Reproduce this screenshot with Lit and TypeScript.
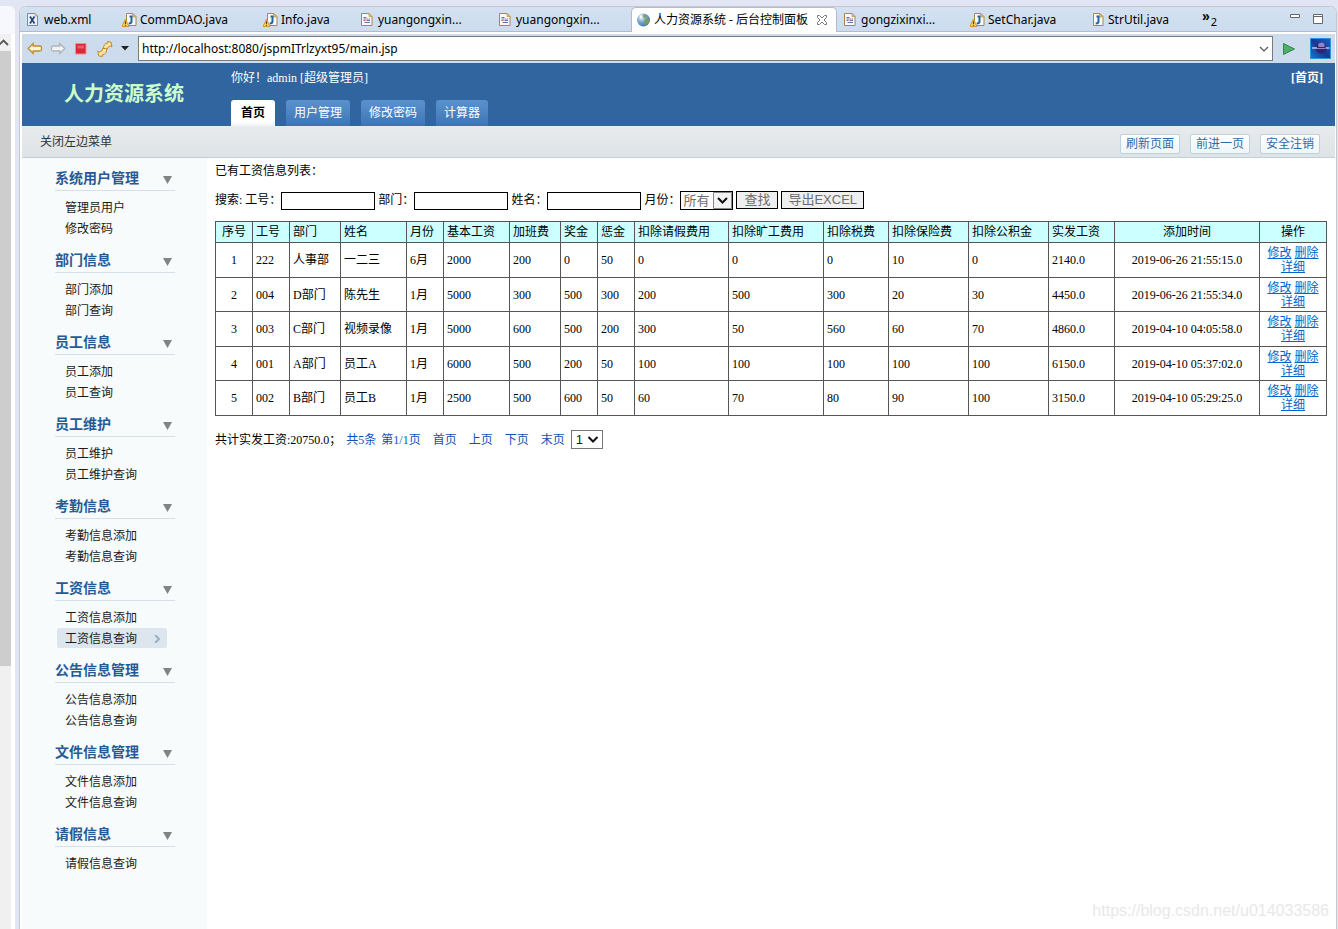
import { LitElement, html, css, svg } from "lit";
import { customElement } from "lit/decorators.js";
import { classMap } from "lit/directives/class-map.js";

const uiFont = css`"Noto Sans", "Noto Sans CJK SC", sans-serif`;
const pageFont = css`"Liberation Serif", "Noto Sans CJK SC", serif`;

type IconName = "xml" | "java" | "javaWarn" | "jsp" | "globe";

const sheet = svg`
  <path d="M4.5 1.5h6.500l3 3v9h-9.500z" fill="#f8f9fb" stroke="#a5884a"/>
  <path d="M10.500 1.500v3.500h3z" fill="#e8c987" stroke="#c09544" stroke-width=".8"/>`;

const jGlyph = svg`<path d="M7.500 4.500h2.600M9.500 4v5.200q0 2.300-2.800 2.300" fill="none" stroke="#2a639c" stroke-width="2"/>`;

const icons: Record<IconName, unknown> = {
  xml: svg`
    <path d="M1.500 1.500h7.500l2.500 2.500v9.500h-10z" fill="#eaf0f7" stroke="#7d8a9c"/>
    <path d="M9 1.500v2.500h2.500z" fill="#f0d39a" stroke="#b59a60" stroke-width=".6"/>
    <path d="M4 4.500l4.500 7M8.500 4.500l-4.500 7" stroke="#24467c" stroke-width="1.700"/>`,
  java: svg`<g transform="translate(-1 0)">${sheet}${jGlyph}</g>`,
  javaWarn: svg`${sheet}${jGlyph}
    <path d="M3.500 7l3.500 7.500h-7z" fill="#f7cf63" stroke="#d08d2e" stroke-width=".9"/>
    <path d="M3.500 9.300v2.700M3.500 12.700v1" stroke="#5d4208" stroke-width="1.100"/>`,
  jsp: svg`
    <path d="M1.500 1.500h7.500l3 3v9h-10.500z" fill="#fbfbfa" stroke="#a5884a"/>
    <path d="M9 1.500v3h3z" fill="#e8c987" stroke="#c09544" stroke-width=".8"/>
    <path d="M3.500 5.500h3M3.500 8.500h2M7 7h1" stroke="#c8506a"/>
    <path d="M3.500 7h3M6.500 8.500h3.500M4.500 10.500h5.500M8.500 7h1.500" stroke="#5b74a8"/>`,
  globe: svg`
    <defs><radialGradient id="g" cx=".35" cy=".3" r=".8"><stop offset="0" stop-color="#e4f1fb"/><stop offset=".5" stop-color="#6fa3cc"/><stop offset="1" stop-color="#3c6b9c"/></radialGradient></defs>
    <circle cx="6.500" cy="8" r="6.500" fill="url(#g)"/>
    <path d="M5.500 3q3-1.500 4.500 1l-1 2.500-2.500-.5zM7.500 7.500q3-1.500 5 0l-.5 3q-2 2.500-4 3l-1-3z" fill="#7d9c58" opacity=".85"/>
    <path d="M2.500 4q1.500-1.500 3-1.500l-.5 3-2 2z" fill="#f4f9fd" opacity=".8"/>`,
};

const editorTabs: { icon: IconName; label: string; width: number; active?: boolean }[] = [
  { icon: "xml", label: "web.xml", width: 96 },
  { icon: "javaWarn", label: "CommDAO.java", width: 141 },
  { icon: "javaWarn", label: "Info.java", width: 97 },
  { icon: "jsp", label: "yuangongxin...", width: 138 },
  { icon: "jsp", label: "yuangongxin...", width: 139 },
  { icon: "globe", label: "人力资源系统 - 后台控制面板", width: 206, active: true },
  { icon: "jsp", label: "gongzixinxi...", width: 127 },
  { icon: "javaWarn", label: "SetChar.java", width: 120 },
  { icon: "java", label: "StrUtil.java", width: 118 },
];

const menu: [string, string[]][] = [
  ["系统用户管理", ["管理员用户", "修改密码"]],
  ["部门信息", ["部门添加", "部门查询"]],
  ["员工信息", ["员工添加", "员工查询"]],
  ["员工维护", ["员工维护", "员工维护查询"]],
  ["考勤信息", ["考勤信息添加", "考勤信息查询"]],
  ["工资信息", ["工资信息添加", "工资信息查询"]],
  ["公告信息管理", ["公告信息添加", "公告信息查询"]],
  ["文件信息管理", ["文件信息添加", "文件信息查询"]],
  ["请假信息", ["请假信息查询"]],
];

const columns: [string, number][] = [
  ["序号", 37], ["工号", 37], ["部门", 51], ["姓名", 66], ["月份", 37],
  ["基本工资", 66], ["加班费", 51], ["奖金", 37], ["惩金", 37],
  ["扣除请假费用", 94], ["扣除旷工费用", 95], ["扣除税费", 65],
  ["扣除保险费", 80], ["扣除公积金", 80], ["实发工资", 66],
  ["添加时间", 145], ["操作", 67],
];

const rows = [
  ["1", "222", "人事部", "一二三", "6月", "2000", "200", "0", "50", "0", "0", "0", "10", "0", "2140.0", "2019-06-26 21:55:15.0"],
  ["2", "004", "D部门", "陈先生", "1月", "5000", "300", "500", "300", "200", "500", "300", "20", "30", "4450.0", "2019-06-26 21:55:34.0"],
  ["3", "003", "C部门", "视频录像", "1月", "5000", "600", "500", "200", "300", "50", "560", "60", "70", "4860.0", "2019-04-10 04:05:58.0"],
  ["4", "001", "A部门", "员工A", "1月", "6000", "500", "200", "50", "100", "100", "100", "100", "100", "6150.0", "2019-04-10 05:37:02.0"],
  ["5", "002", "B部门", "员工B", "1月", "2500", "500", "600", "50", "60", "70", "80", "90", "100", "3150.0", "2019-04-10 05:29:25.0"],
];

@customElement("editor-tabs")
class EditorTabs extends LitElement {
  static styles = css`
    :host { display: flex; height: 24px; border-bottom: 1px solid #b4b9d3;
      background: linear-gradient(#d3e1f1, #ccdcee); border-top-right-radius: 6px; border-top-left-radius: 6px;
      font: 12px/24px ${uiFont}; color: #000; }
    .tab { display: flex; align-items: center; gap: 2px; box-sizing: border-box; height: 25px; padding: 1px 0 0 6px;
      border: 0; background: none; font: inherit; color: inherit; text-align: left; white-space: nowrap; flex: none; }
    .tab svg { flex: none; }
    .active { background: #fff; border: 1px solid #b4b9d3; border-width: 1px 1px 0; border-radius: 5px 5px 0 0; padding: 0 0 0 5px; gap: 1px; }
    .close { margin-left: 7px; }
    .more { border: 0; background: none; padding: 0; display: flex; gap: 1px; font: inherit; color: #000; }
    .count { font-size: 11px; padding-top: 3px; }
    .guillemet { font: bold 14px/18px "Liberation Sans", sans-serif; }
    .window { margin-left: auto; margin-right: 12px; display: flex; gap: 12px; align-items: center; }
    .window button { border: 0; background: none; padding: 0; display: flex; }
  `;
  render() {
    return html`
      ${editorTabs.map((t) => html`
        <button class=${classMap({ tab: true, active: !!t.active })} style="width:${t.width}px">
          <svg width="16" height="16" viewBox="0 0 16 16">${icons[t.icon]}</svg>
          <span>${t.label}</span>
          ${t.active ? html`<svg class="close" width="12" height="12" viewBox="0 0 12 12">
            <path d="M1.500 1.500h2l2.500 2.500 2.500-2.500h2v2l-2.500 2.500 2.500 2.500v2h-2l-2.500-2.500-2.500 2.500h-2v-2l2.500-2.500-2.500-2.500z" fill="none" stroke="#777"/></svg>` : ""}
        </button>`)}
      <button class="more" aria-label="更多标签"><span class="guillemet">»</span><span class="count">2</span></button>
      <div class="window">
        <button aria-label="最小化"><svg width="11" height="11" viewBox="0 0 11 11"><path d="M.5.5h9v3h-9z" fill="#fff" stroke="#666"/></svg></button>
        <button aria-label="最大化"><svg width="11" height="11" viewBox="0 0 11 11"><path d="M.5.500h9v9h-9zM.5 2.500h9" fill="#fff" stroke="#666"/></svg></button>
      </div>`;
  }
}

@customElement("browser-bar")
class BrowserBar extends LitElement {
  static styles = css`
    :host { display: flex; align-items: center; height: 29px; background: #cddcec; border-top: 2px solid #fff; }
    button { border: 0; background: none; padding: 0; display: flex; }
    .nav { display: flex; align-items: center; gap: 7px; padding-left: 5px; width: 111px; box-sizing: content-box; }
    .address { flex: 1; display: flex; align-items: center; height: 23px; border: 1px solid #7a7a7a; background: #fff; }
    .url { flex: 1; border: 0; outline: 0; padding: 0 3px; font: 12px/20px ${uiFont}; color: #000; background: none; }
    .go { margin: 0 15px 0 10px; }
    .logo { margin-right: 4px; }
  `;
  render() {
    return html`
      <div class="nav">
        <button aria-label="后退"><svg width="16" height="16" viewBox="0 0 16 16"><path d="M1.200 7.500l5-5v2.500h6.300q2 0 2 1.500v2q0 1.500-2 1.500H6.200v2.500z" fill="#fff6d4" stroke="#c08a30" stroke-width="1.300"/></svg></button>
        <button aria-label="前进"><svg width="16" height="16" viewBox="0 0 16 16"><path d="M14.800 7.500l-5-5v2.500H3.500q-2 0-2 1.500v2q0 1.500 2 1.500h6.300v2.500z" fill="#f1f2f3" stroke="#b0b2b6" stroke-width="1.300"/></svg></button>
        <button aria-label="停止"><svg width="16" height="16" viewBox="0 0 16 16"><path d="M2.500 2.500h10.500v10.500h-10.500z" fill="#d42a3a" stroke="#ef8f92"/><path d="M4.500 4.500h6.500v3h-6.500z" fill="#e8606a"/></svg></button>
        <button aria-label="刷新"><svg width="18" height="16" viewBox="0 0 18 16">
          <path d="M7.500 8.500q-.5-6 4.500-6.500l-.5-1.500 3.500.5 1 5-1.500-1q-3 .5-3.500 3.500z" fill="#fbe4a0" stroke="#c08a30"/>
          <path d="M10.500 7.500q1 5.500-4.500 6.500l.5 1.500-3.700-.5-1-5 1.500 1q3.500-.5 3.200-3.500z" fill="#fbe4a0" stroke="#c08a30"/></svg></button>
        <button aria-label="历史"><svg width="8" height="5" viewBox="0 0 8 5"><path d="M0 0h8L4 4.500z" fill="#222"/></svg></button>
      </div>
      <div class="address">
        <input class="url" aria-label="地址" value="http://localhost:8080/jspmITrlzyxt95/main.jsp">
        <button aria-label="展开地址"><svg width="16" height="16" viewBox="0 0 16 16"><path d="M4 6l4 4 4-4" fill="none" stroke="#555" stroke-width="1.200"/></svg></button>
      </div>
      <button class="go" aria-label="转到"><svg width="12" height="12" viewBox="0 0 12 12"><path d="M.5.5l11 5.500-11 5.500z" fill="#4fae6a" stroke="#2f8a4a"/></svg></button>
      <svg class="logo" width="21" height="21" viewBox="0 0 21 21">
        <defs><linearGradient id="e" x1="0" y1="1" x2="1" y2="0"><stop offset="0" stop-color="#0d7bd0"/><stop offset=".5" stop-color="#163a94"/><stop offset="1" stop-color="#1b62c0"/></linearGradient></defs>
        <path d="M.5.5h20v20h-20z" fill="url(#e)" stroke="#2d93dd"/>
        <circle cx="11" cy="10" r="5.500" fill="#33246e"/>
        <path d="M8 6q4-3 6.500 0v3h-6z" fill="#a99be0" opacity=".8"/>
        <path d="M2 10h5M15.500 10h4" stroke="#b9c4f2" stroke-width="1.600"/>
        <path d="M7 10.500h8" stroke="#8f86cf"/>
      </svg>`;
  }
}

@customElement("site-header")
class SiteHeader extends LitElement {
  static styles = css`
    :host { display: block; font: 12px/18px ${pageFont}; }
    a { text-decoration: none; color: inherit; }
    .banner { display: flex; height: 63px; background: #3065a0; color: #fff; }
    .brand { width: 167px; flex: none; margin: 0; padding: 16px 0 0 42px; font: bold 20px/30px ${pageFont}; color: #cfc; }
    .center { flex: 1; display: flex; flex-direction: column; justify-content: space-between; padding-top: 6px; }
    .home { padding: 6px 12px 0 0; font-weight: bold; }
    nav { display: flex; gap: 11px; }
    .tab { height: 26px; line-height: 26px; padding: 0 8px; border-radius: 3px 3px 0 0; background: linear-gradient(#5a92cf, #3f74b1); }
    .on { padding: 0 10px; background: linear-gradient(#fff 80%, #f1f3f4); color: #000; font-weight: bold; }
    .tools { display: flex; align-items: center; gap: 10px; height: 31px; padding: 0 15px 0 18px;
      background: linear-gradient(#e8ebed, #dde3e6); border-bottom: 1px solid #c3ced5; color: #333; }
    .toggle { margin-right: auto; padding: 1px 0 0; }
    button { font: inherit; border: 0; padding: 0; background: none; color: inherit; }
    .tool { width: 60px; height: 20px; margin-top: 4px; border: 1px solid #bdd2dc; border-radius: 2px; background: linear-gradient(#fff, #f0f5f7); color: #2f6aa8; }
  `;
  render() {
    return html`
      <div class="banner">
        <h1 class="brand">人力资源系统</h1>
        <div class="center">
          <div>你好！admin [超级管理员]</div>
          <nav>
            <a class="tab on" href="#">首页</a>
            <a class="tab" href="#">用户管理</a>
            <a class="tab" href="#">修改密码</a>
            <a class="tab" href="#">计算器</a>
          </nav>
        </div>
        <div class="home">[<a href="#">首页</a>]</div>
      </div>
      <div class="tools">
        <button class="toggle">关闭左边菜单</button>
        <button class="tool">刷新页面</button>
        <button class="tool">前进一页</button>
        <button class="tool">安全注销</button>
      </div>`;
  }
}

@customElement("side-menu")
class SideMenu extends LitElement {
  static styles = css`
    :host { display: block; box-sizing: border-box; width: 185px; flex: none; padding: 9px 32px 0 33px; background: #f7fbfc;
      font: 12px/22px ${pageFont}; color: #1a1a1a; }
    .group { margin-bottom: 10px; }
    .title { display: flex; justify-content: space-between; align-items: center; height: 23px; margin: 0 0 6px; padding-right: 3px;
      border-bottom: 1px solid #d6e0e8; font-size: 14px; color: #265a96; }
    .title svg { margin-top: 3px; }
    ul { list-style: none; margin: 0; padding: 0 8px 0 2px; }
    li { display: flex; }
    a { flex: 1; display: flex; align-items: center; justify-content: space-between; box-sizing: border-box; height: 20px; margin-bottom: 1px; padding: 1px 7px 0 8px;
      border-radius: 2px; color: inherit; text-decoration: none; }
    .current { background: #dde6ee; }
  `;
  render() {
    return menu.map(([title, items]) => html`
      <section class="group">
        <h2 class="title">${title}<svg width="9" height="8" viewBox="0 0 9 8"><path d="M0 0h9L4.500 8z" fill="#808486"/></svg></h2>
        <ul>${items.map((item) => {
          const current = item === "工资信息查询";
          return html`<li><a href="#" class=${classMap({ current })}>${item}${current
            ? html`<svg width="6" height="8" viewBox="0 0 6 8"><path d="M1 0l4 4-4 4" fill="none" stroke="#9db2c8" stroke-width="2"/></svg>` : ""}</a></li>`;
        })}</ul>
      </section>`);
  }
}

@customElement("salary-list")
class SalaryList extends LitElement {
  static styles = css`
    :host { flex: 1; min-width: 0; display: flex; flex-direction: column; padding: 4px 8px 8px; font: 12px/18px ${pageFont}; color: #000; background: #fff; }
    p { margin: 0; }
    .search { display: flex; align-items: center; gap: 3px; height: 18px; margin: 11px 0 12px; }
    .search label { display: flex; align-items: center; white-space: nowrap; }
    .text { box-sizing: border-box; width: 94px; height: 18px; margin-top: 1px; border: 1px solid #000; padding: 0 2px; font: inherit; }
    .pick { display: grid; grid-template: 100% / 1fr auto; border: 1px solid #000; height: 17px; background: #fff; }
    .pick select { grid-area: 1 / 1 / 2 / 3; appearance: none; border: 0; border-radius: 0; background: none; padding: 0 0 0 2px; margin: 0;
      font: 13px/17px "Liberation Sans", "Noto Sans CJK SC", sans-serif; color: #6d6d6d; }
    .pick svg { grid-area: 1 / 2; pointer-events: none; }
    .month { width: 51px; }
    .pages { width: 30px; border-color: #767676; }
    .pages select { color: #222; padding-left: 4px; }
    .btn { box-sizing: border-box; height: 18px; border: 1px solid #000; background: #efefef; color: #6d6d6d; padding: 0 7px;
      font: 13px/16px "Liberation Sans", "Noto Sans CJK SC", sans-serif; }
    .export { padding: 0 6px; }
    table { width: 100%; table-layout: fixed; border-collapse: collapse; }
    th, td { border: 1px solid #555; padding: 0 3px; font-weight: normal; text-align: left; }
    th { height: 20px; background: #cff; white-space: nowrap; }
    td { height: 34px; line-height: 14px; }
    tbody tr:nth-child(even) td { height: 33px; }
    th:first-child, td:first-child, th:nth-last-child(-n + 2), td:nth-last-child(-n + 2) { text-align: center; }
    td a { color: #06c; }
    .footer { display: flex; align-items: center; margin-top: 14px; gap: 12px; color: #1151b4; }
    .footer a { color: inherit; text-decoration: none; }
    .sum { color: #000; }
    .totals { display: flex; gap: 5px; }
    .last { display: flex; align-items: center; gap: 6px; }
    .watermark { margin: auto -2px 0 0; align-self: flex-end; font: 16px/20px "Liberation Sans", sans-serif; color: #e8e8e8; }
  `;
  render() {
    const arrow = html`<svg width="18" height="17" viewBox="0 0 18 17"><path d="M4.500 6l4.500 4.500L13.500 6" fill="none" stroke="#111" stroke-width="2"/></svg>`;
    return html`
      <p>已有工资信息列表：</p>
      <form class="search" @submit=${(e: Event) => e.preventDefault()}>
        <span>搜索:</span>
        <label>工号：<input class="text"></label>
        <label>部门：<input class="text"></label>
        <label>姓名：<input class="text"></label>
        <label>月份：<span class="pick month"><select><option>所有</option></select>
          <svg width="19" height="17" viewBox="0 0 19 17"><path d="M.5.5h18v16h-18z" fill="#f2f2f2" stroke="#888"/><path d="M5 6l4.500 4.500L14 6" fill="none" stroke="#111" stroke-width="2"/></svg></span></label>
        <button class="btn">查找</button>
        <button class="btn export">导出EXCEL</button>
      </form>
      <table>
        <colgroup>${columns.map(([name, w]) => html`<col style=${name === "添加时间" ? "" : `width:${w}px`}>`)}</colgroup>
        <thead><tr>${columns.map(([name]) => html`<th scope="col">${name}</th>`)}</tr></thead>
        <tbody>${rows.map((r) => html`<tr>${r.map((c) => html`<td>${c}</td>`)}
          <td><a href="#">修改</a> <a href="#">删除</a> <a href="#">详细</a></td></tr>`)}</tbody>
      </table>
      <div class="footer">
        <div class="totals"><span class="sum">共计实发工资:20750.0；</span><span>共5条</span><span>第1/1页</span></div>
        <a href="#">首页</a><a href="#">上页</a><a href="#">下页</a>
        <div class="last"><a href="#">末页</a><span class="pick pages"><select aria-label="页码"><option>1</option></select>${arrow}</span></div>
      </div>
      <div class="watermark">https://blog.csdn.net/u014033586</div>`;
  }
}

@customElement("app-root")
class AppRoot extends LitElement {
  static styles = css`
    :host { display: flex; gap: 4px; box-sizing: border-box; min-height: 100vh; padding: 6px 1px 0 0; background: #e1e5f4; }
    .left { width: 15px; flex: none; display: flex; flex-direction: column; background: #fff; border-top-right-radius: 6px; }
    .cap { height: 28px; background: #f6f8fe; border-top-right-radius: 6px; }
    .scroll { flex: 1; width: 11px; display: flex; flex-direction: column; background: #f0f0f0; }
    .up { height: 17px; }
    .thumb { flex: 7; background: #cdcdcd; }
    .track { flex: 3; }
    .editor { flex: 1; min-width: 0; display: flex; flex-direction: column; border: 1px solid #c8c8cc; border-bottom: 0; border-radius: 7px 7px 0 0; background: #fff; }
    .view { flex: 1; display: flex; flex-direction: column; margin: 0 1px 0 2px; }
    .body { flex: 1; display: flex; }
  `;
  render() {
    return html`
      <div class="left">
        <div class="cap"></div>
        <div class="scroll">
          <svg class="up" width="11" height="17" viewBox="0 0 11 17"><path d="M-1 11l4.500-4.500L8 11" fill="none" stroke="#555" stroke-width="1.800"/></svg>
          <div class="thumb"></div><div class="track"></div>
        </div>
      </div>
      <div class="editor">
        <editor-tabs></editor-tabs>
        <div class="view">
          <browser-bar></browser-bar>
          <site-header></site-header>
          <div class="body"><side-menu></side-menu><salary-list></salary-list></div>
        </div>
      </div>`;
  }
}
